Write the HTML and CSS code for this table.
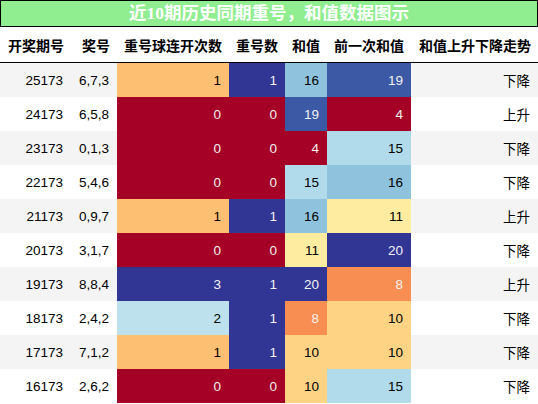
FILE: index.html
```html
<!DOCTYPE html>
<html lang="zh">
<head>
    <meta charset="UTF-8">
    <meta name="viewport" content="width=device-width, initial-scale=1.0">
    <title>近10期历史同期重号</title>
    <link rel="stylesheet" href="styles.css">
</head>
<body>
    <div class="title">近10期历史同期重号，和值数据图示</div>
    <table class="data">
        <colgroup>
            <col class="w-issue">
            <col class="w-nums">
            <col class="w-streak">
            <col class="w-repeat">
            <col class="w-sum">
            <col class="w-prev">
            <col class="w-trend">
        </colgroup>
        <thead>
            <tr>
                <th>开奖期号</th>
                <th>奖号</th>
                <th>重号球连开次数</th>
                <th>重号数</th>
                <th>和值</th>
                <th>前一次和值</th>
                <th>和值上升下降走势</th>
            </tr>
        </thead>
        <tbody>
            <tr>
                <td>25173</td><td>6,7,3</td>
                <td class="h-orange">1</td><td class="h-navy">1</td>
                <td class="h-bluelt">16</td><td class="h-bluemd">19</td>
                <td>下降</td>
            </tr>
            <tr>
                <td>24173</td><td>6,5,8</td>
                <td class="h-red">0</td><td class="h-red">0</td>
                <td class="h-bluemd">19</td><td class="h-red">4</td>
                <td>上升</td>
            </tr>
            <tr>
                <td>23173</td><td>0,1,3</td>
                <td class="h-red">0</td><td class="h-red">0</td>
                <td class="h-red">4</td><td class="h-sky">15</td>
                <td>下降</td>
            </tr>
            <tr>
                <td>22173</td><td>5,4,6</td>
                <td class="h-red">0</td><td class="h-red">0</td>
                <td class="h-sky">15</td><td class="h-bluelt">16</td>
                <td>下降</td>
            </tr>
            <tr>
                <td>21173</td><td>0,9,7</td>
                <td class="h-orange">1</td><td class="h-navy">1</td>
                <td class="h-bluelt">16</td><td class="h-yellow">11</td>
                <td>上升</td>
            </tr>
            <tr>
                <td>20173</td><td>3,1,7</td>
                <td class="h-red">0</td><td class="h-red">0</td>
                <td class="h-yellow">11</td><td class="h-navy">20</td>
                <td>下降</td>
            </tr>
            <tr>
                <td>19173</td><td>8,8,4</td>
                <td class="h-navy">3</td><td class="h-navy">1</td>
                <td class="h-navy">20</td><td class="h-coral">8</td>
                <td>上升</td>
            </tr>
            <tr>
                <td>18173</td><td>2,4,2</td>
                <td class="h-ice">2</td><td class="h-navy">1</td>
                <td class="h-coral">8</td><td class="h-sand">10</td>
                <td>下降</td>
            </tr>
            <tr>
                <td>17173</td><td>7,1,2</td>
                <td class="h-orange">1</td><td class="h-navy">1</td>
                <td class="h-sand">10</td><td class="h-sand">10</td>
                <td>下降</td>
            </tr>
            <tr>
                <td>16173</td><td>2,6,2</td>
                <td class="h-red">0</td><td class="h-red">0</td>
                <td class="h-sand">10</td><td class="h-sky">15</td>
                <td>下降</td>
            </tr>
        </tbody>
    </table>
</body>
</html>
```
FILE: styles.css
```css
body{
    margin: 0;
    background-color: #fff;
    font-family: "Liberation Sans", "Noto Sans CJK SC", sans-serif;
}

.title{
    height: 25px;
    line-height: 25px;
    border: 1px solid #000;
    background-color: #90ee90;
    color: #fff;
    text-align: center;
    font-family: "Liberation Serif", "Noto Sans CJK SC", serif;
    font-size: 17.5px;
    font-weight: bold;
}

.data{
    width: 538px;
    table-layout: fixed;
    border-collapse: collapse;
    border-spacing: 0;
}

.w-issue{ width: 71px; }
.w-nums{ width: 46px; }
.w-streak{ width: 112px; }
.w-repeat{ width: 56px; }
.w-sum{ width: 42px; }
.w-prev{ width: 84px; }
.w-trend{ width: 127px; }

.data th{
    height: 35px;
    padding: 0 7px;
    text-align: right;
    font-size: 14px;
    font-weight: bold;
    color: #000;
    border-bottom: 1px solid #000;
    white-space: nowrap;
}

.data td{
    height: 34px;
    padding: 0 8px 0 0;
    text-align: right;
    font-size: 13.5px;
    color: #000;
    white-space: nowrap;
}

.data tbody tr:nth-child(odd){
    background-color: #f4f4f4;
}

/* gradient colours */
.h-red{ background-color: #a50026; color: #f1f1f1 !important; }
.h-coral{ background-color: #f98e52; color: #f1f1f1 !important; }
.h-orange{ background-color: #fdbf71; }
.h-sand{ background-color: #fed384; }
.h-yellow{ background-color: #feeca0; }
.h-ice{ background-color: #bde2ee; }
.h-sky{ background-color: #b1dbea; }
.h-bluelt{ background-color: #8fc3dd; }
.h-bluemd{ background-color: #3c59a6; color: #f1f1f1 !important; }
.h-navy{ background-color: #313695; color: #f1f1f1 !important; }
```
